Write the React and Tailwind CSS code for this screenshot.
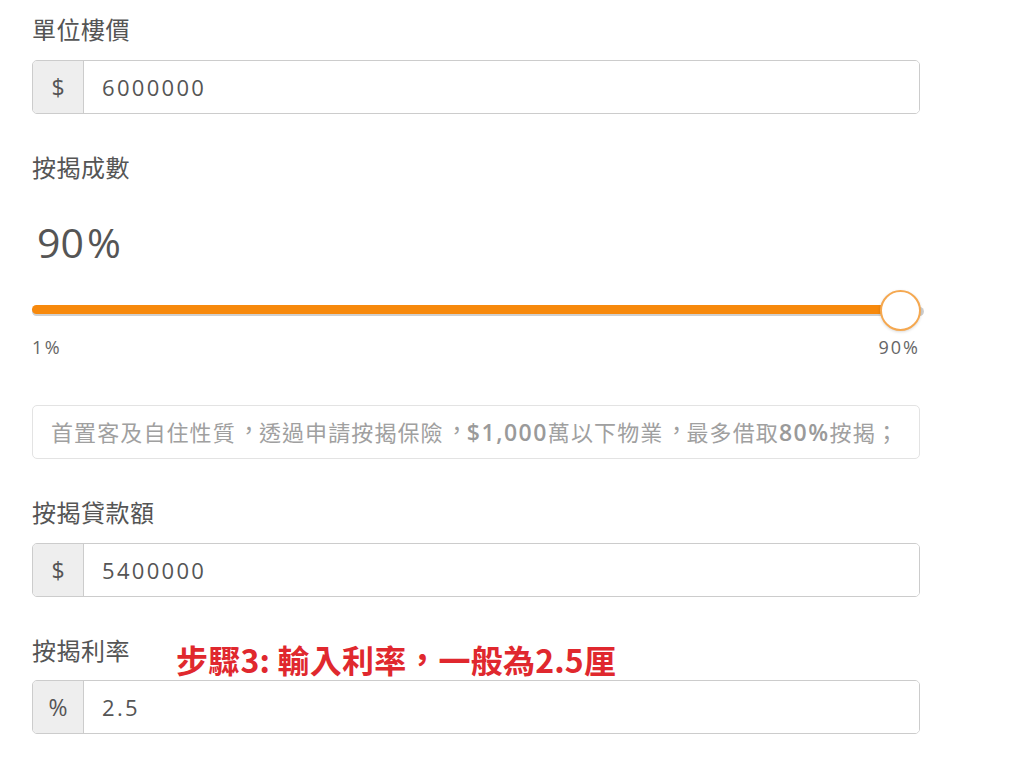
import React, { useState } from "react";

function InputGroup({ addon, value }) {
    return (
        <div className="flex h-[54px] w-full rounded-[5px] border border-[#cccccc] overflow-hidden shadow-[inset_0_1px_1px_rgba(0,0,0,0.075)]">
            <span className="flex w-[51px] shrink-0 items-center justify-center border-r border-[#cccccc] bg-[#eeeeee] text-[23px] text-[#555555]">{addon}</span>
            <input type="text" className="flex-1 bg-white pl-[18px] text-[22px] tracking-[2.3px] text-[#555555] outline-none" defaultValue={value} />
        </div>
    );
}

// full-width comma lifted a little, as the page's font shows it
function Comma({ shift }) {
    return <span className={"relative " + shift}>，</span>;
}

function App() {
    const [ratio] = useState(90);

    return (
        <div lang="zh-Hant-TW" className="min-h-[771px] w-[1024px] bg-white font-['Open_Sans','Noto_Sans_CJK_TC',sans-serif]">
            <div className="w-[888px] ml-[32px] pt-[14px]">
                <label className="block text-[24px] leading-[32px] tracking-[0.5px] text-[#555555]">單位樓價</label>
                <div className="mt-[14px]"><InputGroup addon="$" value="6000000" /></div>

                <label className="mt-[38px] block text-[24px] leading-[32px] tracking-[0.5px] text-[#555555]">按揭成數</label>
                <div className="mt-[36px] pl-[5px] text-[41px] leading-[44px] text-[#555555]">{ratio}<span className="ml-[3px]">%</span></div>

                {/* slider */}
                <div className="relative mt-[26px] h-[42px]">
                    <div className="absolute left-0 right-[-4px] top-[17px] h-[9px] rounded-full bg-[#cfcfcf]"></div>
                    <div className="absolute left-0 right-[20px] top-[15px] h-[9px] rounded-full bg-[#f7890c]"></div>
                    <div className="absolute right-[-1px] top-0 h-[41px] w-[41px] rounded-full border-2 border-[#f5a850] bg-white shadow-[0_1px_3px_rgba(0,0,0,0.15)]"></div>
                </div>
                <div className="mt-[3px] flex justify-between text-[18px] leading-[24px] text-[#666666]">
                    <span className="tracking-[2.5px]">1%</span>
                    <span className="tracking-[2px]">90%</span>
                </div>

                <div className="mt-[46px] flex h-[54px] items-center rounded-[5px] border border-[#e3e3e3] px-[18px] text-[22px] tracking-[1.1px] text-[#a0a0a0] whitespace-nowrap overflow-hidden">
                    首置客及自住性質<Comma shift="left-[2px] -top-[3px]" />透過申請按揭保險<Comma shift="left-[2px] -top-[3px]" /><span className="text-[23px] font-semibold tracking-[1.5px] text-[#9a9a9a]">$1,000</span>萬以下物業<Comma shift="left-[2px] -top-[3px]" />最多借取<span className="text-[23px] font-semibold tracking-[1.5px] text-[#9a9a9a]">80%</span>按揭；
                </div>

                <label className="mt-[38px] block text-[24px] leading-[32px] tracking-[0.5px] text-[#555555]">按揭貸款額</label>
                <div className="mt-[14px]"><InputGroup addon="$" value="5400000" /></div>

                <div className="mt-[38px] flex items-center">
                    <label className="block text-[24px] leading-[32px] tracking-[0.5px] text-[#555555]">按揭利率</label>
                    <span className="relative top-[8px] ml-[46px] font-['Noto_Sans_CJK_TC',sans-serif] text-[32px] font-bold leading-[32px] tracking-[0.2px] text-[#e0282e]">步驟3: 輸入利率<Comma shift="left-0 -top-[2px]" />一般為2.5厘</span>
                </div>
                <div className="mt-[13px]"><InputGroup addon="%" value="2.5" /></div>
            </div>
        </div>
    );
}

export default App;
